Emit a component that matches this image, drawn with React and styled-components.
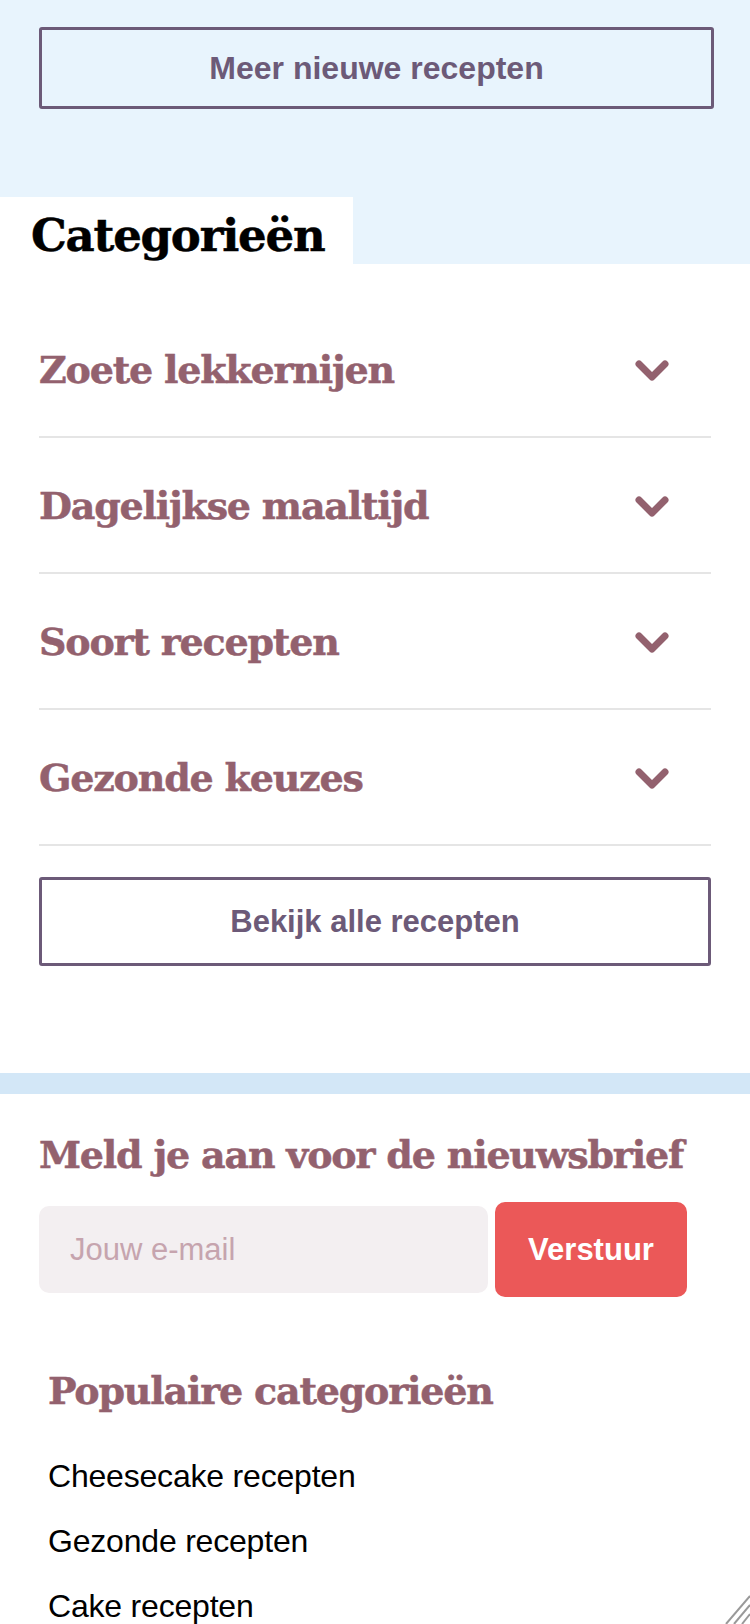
import React from "react";
import styled, { createGlobalStyle } from "styled-components";

const Global = createGlobalStyle`
  * { box-sizing: border-box; }
  body {
    margin: 0;
    background: #ffffff;
    font-family: "Liberation Sans", Arial, sans-serif;
  }
`;

const Page = styled.div`
  position: relative;
  width: 750px;
  height: 1624px;
  overflow: hidden;
  background: #ffffff;
`;

const TopBand = styled.section`
  background: #e8f4fd;
  padding: 27px 36px 0 39px;
  display: flex;
  flex-direction: column;
`;

const OutlineButton = styled.button`
  display: flex;
  align-items: center;
  justify-content: center;
  width: 100%;
  height: ${(p) => p.$height}px;
  background: transparent;
  border: 3px solid #6c5a78;
  border-radius: 3px;
  color: #6c5a78;
  font-family: "Liberation Sans", Arial, sans-serif;
  font-weight: 700;
  font-size: ${(p) => p.$size || 31}px;
  cursor: pointer;
`;

const Tab = styled.div`
  margin: 88px 0 0 -39px;
  width: 353px;
  height: 67px;
  background: #ffffff;
  padding-left: 31px;
  display: flex;
  align-items: flex-end;
`;

const serif = `
  font-family: "DejaVu Serif", Georgia, serif;
  font-weight: 700;
  -webkit-text-stroke: 0.5px currentColor;
`;

const TabTitle = styled.h2`
  ${serif}
  margin: 0 0 6px;
  font-size: 45px;
  letter-spacing: -1.2px;
  line-height: 1;
  color: #000000;
`;

const Categories = styled.section`
  padding: 38px 39px 0;
`;

const Row = styled.div`
  height: 136px;
  border-bottom: 2px solid #e5e5e5;
  display: flex;
  align-items: center;
  justify-content: space-between;
  padding-right: 42px;
`;

const RowTitle = styled.span`
  ${serif}
  font-size: 38px;
  letter-spacing: -1.2px;
  color: #93616e;
`;

const ChevronIcon = styled.svg`
  margin-top: 4px;
`;

const Chevron = () => (
  <ChevronIcon width="34" height="24" viewBox="0 0 34 24">
    <polyline
      points="4,5 17,18 30,5"
      fill="none"
      stroke="#93616e"
      strokeWidth="7"
      strokeLinecap="round"
      strokeLinejoin="round"
    />
  </ChevronIcon>
);

const ButtonWrap = styled.div`
  margin-top: 31px;
  padding-bottom: 107px;
`;

const Strip = styled.div`
  height: 21px;
  background: #d3e7f7;
`;

const Newsletter = styled.section`
  padding: 33px 39px 0;
`;

const Heading = styled.h3`
  ${serif}
  margin: 0;
  font-size: 38px;
  letter-spacing: -1.2px;
  line-height: 56px;
  color: #93616e;
  padding-left: ${(p) => p.$indent || 0}px;
`;

const Form = styled.form`
  margin-top: 19px;
  display: flex;
  align-items: center;
  gap: 7px;
`;

const Input = styled.input`
  width: 449px;
  height: 87px;
  border: none;
  border-radius: 10px;
  background: #f3eff1;
  padding: 0 31px;
  font-family: "Liberation Sans", Arial, sans-serif;
  font-size: 31px;
  color: #333;
  outline: none;
  &::placeholder {
    color: #c6a4ae;
  }
`;

const Submit = styled.button`
  width: 192px;
  height: 95px;
  border: none;
  border-radius: 10px;
  background: #eb5858;
  color: #ffffff;
  font-family: "Liberation Sans", Arial, sans-serif;
  font-weight: 700;
  font-size: 31px;
  cursor: pointer;
`;

const Popular = styled.section`
  padding: 66px 39px 0;
`;

const LinkList = styled.ul`
  list-style: none;
  margin: 25px 0 0;
  padding: 0 0 0 9px;
`;

const LinkItem = styled.li`
  height: 65px;
  display: flex;
  align-items: center;
  font-family: "Liberation Sans", Arial, sans-serif;
  font-size: 32px;
  letter-spacing: -0.2px;
  color: #000000;
`;

const Grip = styled.svg`
  position: absolute;
  right: 0;
  bottom: 0;
`;

const rows = [
  "Zoete lekkernijen",
  "Dagelijkse maaltijd",
  "Soort recepten",
  "Gezonde keuzes",
];

const popular = ["Cheesecake recepten", "Gezonde recepten", "Cake recepten"];

export default function App() {
  return (
    <Page>
      <Global />
      <TopBand>
        <OutlineButton $height={82} $size={32}>
          Meer nieuwe recepten
        </OutlineButton>
        <Tab>
          <TabTitle>Categorieën</TabTitle>
        </Tab>
      </TopBand>

      <Categories>
        {rows.map((r) => (
          <Row key={r}>
            <RowTitle>{r}</RowTitle>
            <Chevron />
          </Row>
        ))}
        <ButtonWrap>
          <OutlineButton $height={89}>Bekijk alle recepten</OutlineButton>
        </ButtonWrap>
      </Categories>

      <Strip />

      <Newsletter>
        <Heading>Meld je aan voor de nieuwsbrief</Heading>
        <Form onSubmit={(e) => e.preventDefault()}>
          <Input placeholder="Jouw e-mail" />
          <Submit type="submit">Verstuur</Submit>
        </Form>
      </Newsletter>

      <Popular>
        <Heading $indent={9}>Populaire categorieën</Heading>
        <LinkList>
          {popular.map((p) => (
            <LinkItem key={p}>{p}</LinkItem>
          ))}
        </LinkList>
      </Popular>

      <Grip width="28" height="32" viewBox="0 0 28 32">
        <line x1="4" y1="32" x2="28" y2="4" stroke="#999" strokeWidth="2" />
        <line x1="12" y1="32" x2="28" y2="13" stroke="#999" strokeWidth="2" />
        <line x1="20" y1="32" x2="28" y2="22" stroke="#999" strokeWidth="2" />
      </Grip>
    </Page>
  );
}
